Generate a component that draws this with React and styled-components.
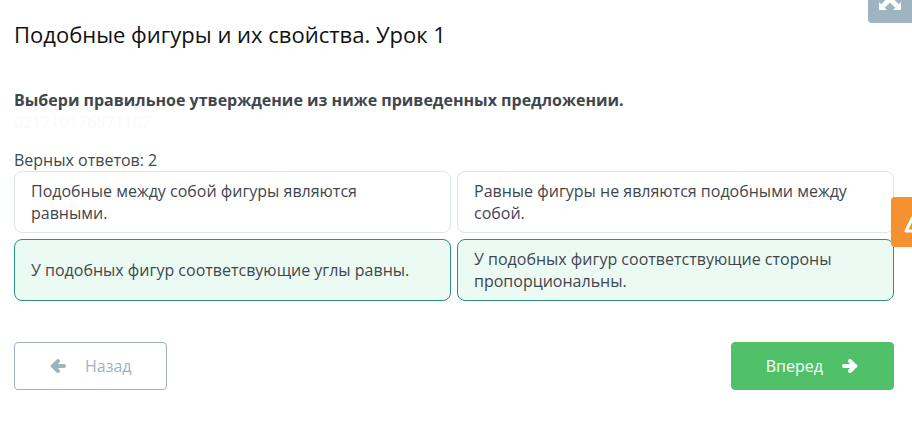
import React, { useState } from "react";
import styled, { createGlobalStyle } from "styled-components";

const GlobalStyle = createGlobalStyle`
  * {
    box-sizing: border-box;
  }
  body {
    margin: 0;
    background-color: #fff;
    color: #3f474d;
    font-family: "Open Sans", "Noto Sans", sans-serif;
    font-size: 16px;
    line-height: 22px;
  }
`;

const Page = styled.main`
  padding: 19px 18px 40px 14px;
`;

const Title = styled.h1`
  margin: 0 0 40px;
  color: #111;
  font-size: 22px;
  font-weight: 400;
  line-height: 30px;
`;

const Question = styled.p`
  margin: 0;
  font-weight: 700;
`;

const Code = styled.p`
  margin: 0 0 16px;
  color: #fafafa;
`;

const Hint = styled.p`
  margin: 0;
`;

const Answers = styled.div`
  display: grid;
  grid-template-columns: 1fr 1fr;
  gap: 6px;
`;

const Answer = styled.button`
  min-height: 62px;
  padding: 8px 16px;
  border: 1px solid ${(props) => (props.$selected ? "#2c9080" : "#dbe5e6")};
  border-radius: 8px;
  background-color: ${(props) => (props.$selected ? "#ecfaf4" : "#fff")};
  color: inherit;
  font: inherit;
  text-align: left;
  cursor: pointer;
`;

const Footer = styled.div`
  display: flex;
  justify-content: space-between;
  margin-top: 41px;
`;

const NavButton = styled.button`
  display: flex;
  align-items: center;
  gap: 18px;
  height: 48px;
  padding: 0 34px;
  border: 1px solid ${(props) => (props.$primary ? "#50c168" : "#9fb3bf")};
  border-radius: 4px;
  background-color: ${(props) => (props.$primary ? "#50c168" : "#fff")};
  color: ${(props) => (props.$primary ? "#fff" : "#9db3bf")};
  font: inherit;
  cursor: pointer;
`;

const ExpandButton = styled.button`
  position: fixed;
  top: -20px;
  right: 0;
  display: flex;
  align-items: flex-end;
  justify-content: center;
  width: 44px;
  height: 43px;
  padding: 0 0 13px;
  border: 0;
  border-radius: 4px 0 0 4px;
  background-color: #9eb4c1;
  color: #fff;
  cursor: pointer;
`;

const WarningButton = styled.button`
  position: fixed;
  top: 197px;
  right: -29px;
  display: flex;
  align-items: center;
  width: 50px;
  height: 50px;
  padding: 0 0 0 12px;
  border: 0;
  border-radius: 4px;
  background-color: #f5922f;
  color: #fff;
  cursor: pointer;
`;

const Arrow = ({ right }) => (
  <svg width="18" height="16" viewBox="0 0 18 16" aria-hidden="true">
    <g
      transform={right ? "matrix(-1 0 0 1 18 0)" : undefined}
      fill="none"
      stroke="currentColor"
      strokeWidth="4"
    >
      <path d="M4 8h11" strokeLinecap="round" />
      <path d="M9 3L4 8l5 5" strokeLinecap="round" />
    </g>
  </svg>
);

const ExpandIcon = () => (
  <svg width="22" height="22" viewBox="0 0 22 22" aria-hidden="true">
    <path d="M4 4l14 14M18 4L4 18" stroke="currentColor" strokeWidth="5" />
    <path
      d="M0 0h8L0 8zM22 0v8l-8-8zM0 22v-8l8 8zM22 22h-8l8-8z"
      fill="currentColor"
    />
  </svg>
);

const WarningIcon = () => (
  <svg width="28" height="26" viewBox="0 0 28 26" aria-hidden="true">
    <path
      d="M13 2L3 22h20z"
      fill="none"
      stroke="currentColor"
      strokeWidth="3"
      strokeLinejoin="round"
    />
  </svg>
);

const answers = [
  "Подобные между собой фигуры являются равными.",
  "Равные фигуры не являются подобными между собой.",
  "У подобных фигур соответсвующие углы равны.",
  "У подобных фигур соответствующие стороны пропорциональны.",
];

const App = () => {
  const [selected, setSelected] = useState([2, 3]);

  const toggle = (index) => {
    setSelected(
      selected.includes(index)
        ? selected.filter((item) => item !== index)
        : [...selected, index]
    );
  };

  return (
    <>
      <GlobalStyle />
      <Page>
        <Title>Подобные фигуры и их свойства. Урок 1</Title>
        <Question>
          Выбери правильное утверждение из ниже приведенных предложении.
        </Question>
        <Code>021210176871107</Code>
        <Hint>Верных ответов: 2</Hint>
        <Answers>
          {answers.map((text, index) => (
            <Answer
              key={text}
              type="button"
              $selected={selected.includes(index)}
              aria-pressed={selected.includes(index)}
              onClick={() => toggle(index)}
            >
              {text}
            </Answer>
          ))}
        </Answers>
        <Footer>
          <NavButton type="button">
            <Arrow />
            Назад
          </NavButton>
          <NavButton type="button" $primary>
            Вперед
            <Arrow right />
          </NavButton>
        </Footer>
      </Page>
      <ExpandButton type="button" aria-label="На весь экран">
        <ExpandIcon />
      </ExpandButton>
      <WarningButton type="button" aria-label="Сообщить об ошибке">
        <WarningIcon />
      </WarningButton>
    </>
  );
};

export default App;
